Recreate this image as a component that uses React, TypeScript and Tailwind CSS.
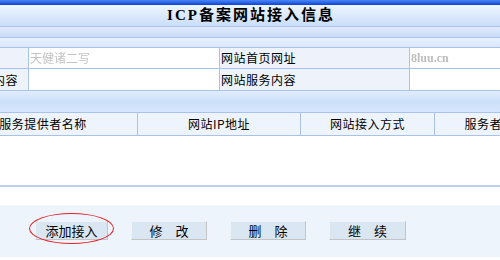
export default function App() {
  return (
    <div className="relative w-[500px] h-[260px] overflow-hidden bg-white text-black font-['Noto_Sans_CJK_SC',sans-serif]">
      <div className="h-[5px] bg-gradient-to-b from-[#4b86f2] to-[#0b40d4]" />
      <div className="h-[22px] flex items-center justify-center border-b border-[#a9c3ec] bg-gradient-to-b from-[#eef5fe] to-[#cadef9]">
        <span className="text-[15px] font-bold tracking-[2px] pl-[2px] font-['Liberation_Serif','Noto_Sans_CJK_SC',serif]">
          ICP备案网站接入信息
        </span>
      </div>
      <div className="h-[11px] border-b border-[#a9c3ec] bg-gradient-to-b from-[#dfebfc] to-[#c8dcf8]" />
      <div className="h-[9px] bg-gradient-to-b from-[#e8f1fd] to-[#d8e7fb]" />

      <div className="-ml-[61px] w-[600px] text-[12px] leading-none">
        <div className="flex h-[22px] border-y border-[#a9c2ea]">
          <div className="w-[90px] shrink-0 bg-[#eef3fb] border-r border-[#a9c2ea]" />
          <div className="w-[191px] shrink-0 bg-white border-r border-[#a9c2ea] flex items-center pl-[1px] text-[#c4c4c4] blur-[0.7px]">天健诸二写</div>
          <div className="w-[190px] shrink-0 bg-[#eef3fb] border-r border-[#a9c2ea] flex items-center px-[1px] tracking-[0.5px]">网站首页网址</div>
          <div className="flex-1 bg-white flex items-center pl-[1px] text-[#bdbdbd] blur-[0.7px] font-['Liberation_Serif',serif] font-bold">8luu.cn</div>
        </div>
        <div className="flex h-[22px] border-b border-[#a9c2ea]">
          <div className="w-[90px] shrink-0 bg-[#eef3fb] border-r border-[#a9c2ea] flex items-center px-1 tracking-[0.5px]">网站服务内容</div>
          <div className="w-[191px] shrink-0 bg-white border-r border-[#a9c2ea]" />
          <div className="w-[190px] shrink-0 bg-[#eef3fb] border-r border-[#a9c2ea] flex items-center px-[1px] tracking-[0.5px]">网站服务内容</div>
          <div className="flex-1 bg-white" />
        </div>
      </div>

      <div className="h-[22px] border-b border-[#a9c3ec] bg-gradient-to-b from-[#e2edfc] via-[#cbdff9] to-[#d6e6fb]" />

      <div className="-ml-[51px] w-[620px] flex h-[23px] border-b border-[#a9c2ea] bg-[#eef4fd] text-[12px] leading-none tracking-[0.5px]">
        <div className="w-[189px] shrink-0 border-r border-[#a9c2ea] flex items-center justify-center">服务提供者名称</div>
        <div className="w-[163px] shrink-0 border-r border-[#a9c2ea] flex items-center justify-center">网站IP地址</div>
        <div className="w-[134px] shrink-0 border-r border-[#a9c2ea] flex items-center justify-center">网站接入方式</div>
        <div className="w-[134px] shrink-0 flex items-center justify-center">服务者联系人</div>
      </div>

      <div className="h-[51px] border-b-2 border-[#bccff0] bg-white" />
      <div className="h-[18px] bg-white" />

      <div className="h-[52px] bg-[#eef4fc] flex items-start pt-[16px] pl-[35px] gap-[23px] text-[13px] leading-none">
        <div className="relative">
          <button className="w-[73px] h-[19px] bg-[#dbe6f3] border border-[#eef3fa] border-r-[#c4c4c4] border-b-[#c4c4c4] flex items-center justify-center">
            添加接入
          </button>
          <div className="absolute -left-[6px] -top-[8px] w-[85px] h-[31px] rounded-[50%] border border-[#e3232b]" />
        </div>
        <button className="w-[76px] h-[19px] bg-[#dbe6f3] border border-[#eef3fa] border-r-[#c4c4c4] border-b-[#c4c4c4] flex items-center justify-center gap-[13px]">
          <span>修</span>
          <span>改</span>
        </button>
        <button className="w-[76px] h-[19px] bg-[#dbe6f3] border border-[#eef3fa] border-r-[#c4c4c4] border-b-[#c4c4c4] flex items-center justify-center gap-[13px]">
          <span>删</span>
          <span>除</span>
        </button>
        <button className="w-[77px] h-[19px] bg-[#dbe6f3] border border-[#eef3fa] border-r-[#c4c4c4] border-b-[#c4c4c4] flex items-center justify-center gap-[13px]">
          <span>继</span>
          <span>续</span>
        </button>
      </div>
    </div>
  );
}
